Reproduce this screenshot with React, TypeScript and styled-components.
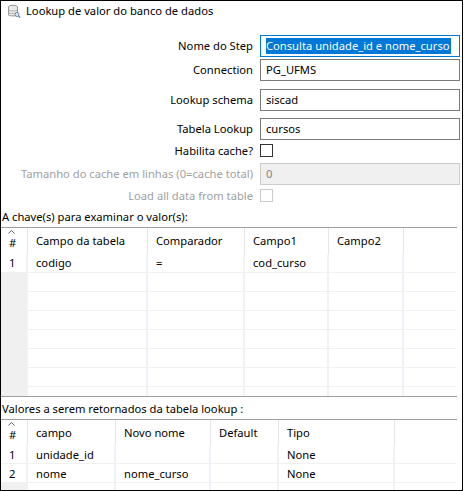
import React from 'react';
import styled, { createGlobalStyle } from 'styled-components';

const FONT = `"Noto Sans", "Liberation Sans", sans-serif`;

const GlobalStyle = createGlobalStyle`
  html, body {
    margin: 0;
    padding: 0;
    background: #fff;
  }
  body {
    font-family: ${FONT};
    font-size: 11.2px;
    color: #000;
  }
`;

const Frame = styled.div`
  width: 463px;
  height: 491px;
  box-sizing: border-box;
  border: 1px solid #000;
  background: #fff;
  display: flex;
  flex-direction: column;
  overflow: hidden;
`;

const TitleBar = styled.div`
  height: 20px;
  display: flex;
  align-items: center;
  gap: 5px;
  padding-left: 6px;
`;

const Form = styled.div`
  display: flex;
  flex-direction: column;
  padding: 14px 2px 0 0;
`;

const FieldRow = styled.div<{ $top?: number; $h?: number }>`
  display: grid;
  grid-template-columns: 252px 1fr;
  column-gap: 7px;
  align-items: center;
  height: ${(p) => p.$h ?? 22}px;
  margin-top: ${(p) => p.$top ?? 0}px;
`;

const Label = styled.div<{ $disabled?: boolean }>`
  text-align: right;
  white-space: nowrap;
  color: ${(p) => (p.$disabled ? '#a0a0a0' : '#000')};
`;

const TextBox = styled.div<{ $focused?: boolean; $disabled?: boolean }>`
  height: 22px;
  box-sizing: border-box;
  display: flex;
  align-items: center;
  padding-left: 5px;
  white-space: nowrap;
  overflow: hidden;
  border: 1px solid
    ${(p) => (p.$focused ? '#0078d7' : p.$disabled ? '#cccccc' : '#7a7a7a')};
  background: ${(p) => (p.$disabled ? '#f0f0f0' : '#fff')};
  color: ${(p) => (p.$disabled ? '#838383' : '#000')};
`;

const Selected = styled.span`
  background: #0078d7;
  color: #fff;
  line-height: 16px;
  padding-right: 1px;
`;

const CheckBox = styled.div<{ $disabled?: boolean }>`
  width: 13px;
  height: 13px;
  box-sizing: border-box;
  border: 1px solid ${(p) => (p.$disabled ? '#cccccc' : '#333')};
  background: #fff;
`;

const SectionLabel = styled.div<{ $h: number }>`
  height: ${(p) => p.$h}px;
  display: flex;
  align-items: center;
  padding-left: 1px;
  white-space: nowrap;
`;

const TableBox = styled.div<{ $h: number; $bottom?: boolean }>`
  width: 456px;
  height: ${(p) => p.$h}px;
  overflow: hidden;
  border-top: 1px solid #a0a0a0;
  border-bottom: ${(p) => (p.$bottom ? '1px solid #a0a0a0' : 'none')};
`;

const Row = styled.div<{ $cols: string; $h: number }>`
  display: grid;
  grid-template-columns: ${(p) => p.$cols};
  height: ${(p) => p.$h}px;
`;

const HeadCell = styled.div<{ $last?: boolean }>`
  position: relative;
  display: flex;
  align-items: center;
  padding-left: 8px;
  white-space: nowrap;
  overflow: hidden;
  border-right: ${(p) => (p.$last ? 'none' : '1px solid #e5e5e5')};
`;

const HashHead = styled(HeadCell)`
  padding-top: 3px;
`;

const SortCaret = styled.svg`
  position: absolute;
  left: 7px;
  top: 2px;
`;

const Cell = styled.div<{ $num?: boolean; $empty?: boolean; $last?: boolean }>`
  display: flex;
  align-items: center;
  padding-left: 8px;
  white-space: nowrap;
  overflow: hidden;
  box-sizing: border-box;
  border-bottom: 1px solid #f0f0f0;
  border-right: ${(p) => (p.$last ? 'none' : '2px solid #eef2f9')};
  background: ${(p) => (p.$num && p.$empty ? '#f0f0f0' : '#fff')};
`;

const DbIcon = () => (
  <svg width="14" height="14" viewBox="0 0 14 14">
    <ellipse cx="6" cy="3" rx="4.5" ry="1.8" fill="#e8e8e8" stroke="#8a8a8a" strokeWidth="0.9" />
    <path d="M1.5 3 V11 C1.5 12.2 10.5 12.2 10.5 11 V3" fill="#e8e8e8" stroke="#8a8a8a" strokeWidth="0.9" />
    <path d="M1.5 6 C1.5 7.2 10.5 7.2 10.5 6 M1.5 8.5 C1.5 9.7 10.5 9.7 10.5 8.5" fill="none" stroke="#a8a8a8" strokeWidth="0.8" />
    <circle cx="10" cy="10.5" r="2" fill="#dfe9f3" stroke="#5a7fa8" strokeWidth="0.9" />
    <path d="M11.4 11.9 L13.3 13.6" stroke="#5a7fa8" strokeWidth="1.2" />
  </svg>
);

type TableProps = {
  cols: string;
  headers: string[];
  rows: string[][];
  total: number;
  height: number;
  headH: number;
  bottom?: boolean;
};

const DataTable: React.FC<TableProps> = ({ cols, headers, rows, total, height, headH, bottom }) => {
  const allRows: (string[] | null)[] = [];
  for (let i = 0; i < total; i++) allRows.push(rows[i] ?? null);
  return (
    <TableBox $h={height} $bottom={bottom}>
      <Row $cols={cols} $h={headH}>
        <HashHead>
          <SortCaret width="7" height="4" viewBox="0 0 7 4">
            <path d="M0.5 3.5 L3.5 0.5 L6.5 3.5" fill="none" stroke="#606060" strokeWidth="1" />
          </SortCaret>
          #
        </HashHead>
        {headers.map((h) => (
          <HeadCell key={h}>{h}</HeadCell>
        ))}
        <HeadCell $last />
      </Row>
      {allRows.map((r, i) => (
        <Row key={i} $cols={cols} $h={19}>
          <Cell $num $empty={!r}>{r ? i + 1 : ''}</Cell>
          {headers.map((_, j) => (
            <Cell key={j}>{r ? r[j] : ''}</Cell>
          ))}
          <Cell $last />
        </Row>
      ))}
    </TableBox>
  );
};

const App: React.FC = () => {
  return (
    <>
      <GlobalStyle />
      <Frame>
        <TitleBar>
          <DbIcon />
          <span>Lookup de valor do banco de dados</span>
        </TitleBar>
        <Form>
          <FieldRow>
            <Label>Nome do Step</Label>
            <TextBox $focused>
              <Selected>Consulta unidade_id e nome_curso</Selected>
            </TextBox>
          </FieldRow>
          <FieldRow $top={2}>
            <Label>Connection</Label>
            <TextBox>PG_UFMS</TextBox>
          </FieldRow>
          <FieldRow $top={8}>
            <Label>Lookup schema</Label>
            <TextBox>siscad</TextBox>
          </FieldRow>
          <FieldRow $top={7}>
            <Label>Tabela Lookup</Label>
            <TextBox>cursos</TextBox>
          </FieldRow>
          <FieldRow>
            <Label>Habilita cache?</Label>
            <CheckBox />
          </FieldRow>
          <FieldRow $top={1} $h={21}>
            <Label $disabled>Tamanho do cache em linhas (0=cache total)</Label>
            <TextBox $disabled>0</TextBox>
          </FieldRow>
          <FieldRow $top={1}>
            <Label $disabled>Load all data from table</Label>
            <CheckBox $disabled />
          </FieldRow>
        </Form>
        <SectionLabel $h={20}>A chave(s) para examinar o valor(s):</SectionLabel>
        <DataTable
          cols="27px 120px 97px 84px 75px 1fr"
          headers={['Campo da tabela', 'Comparador', 'Campo1', 'Campo2']}
          rows={[['codigo', '=', 'cod_curso', '']]}
          total={8}
          height={169}
          headH={26}
          bottom
        />
        <SectionLabel $h={23}>Valores a serem retornados da tabela lookup :</SectionLabel>
        <DataTable
          cols="27px 88px 95px 68px 116px 1fr"
          headers={['campo', 'Novo nome', 'Default', 'Tipo']}
          rows={[
            ['unidade_id', '', '', 'None'],
            ['nome', 'nome_curso', '', 'None'],
          ]}
          total={3}
          height={70}
          headH={25}
        />
      </Frame>
    </>
  );
};

export default App;
